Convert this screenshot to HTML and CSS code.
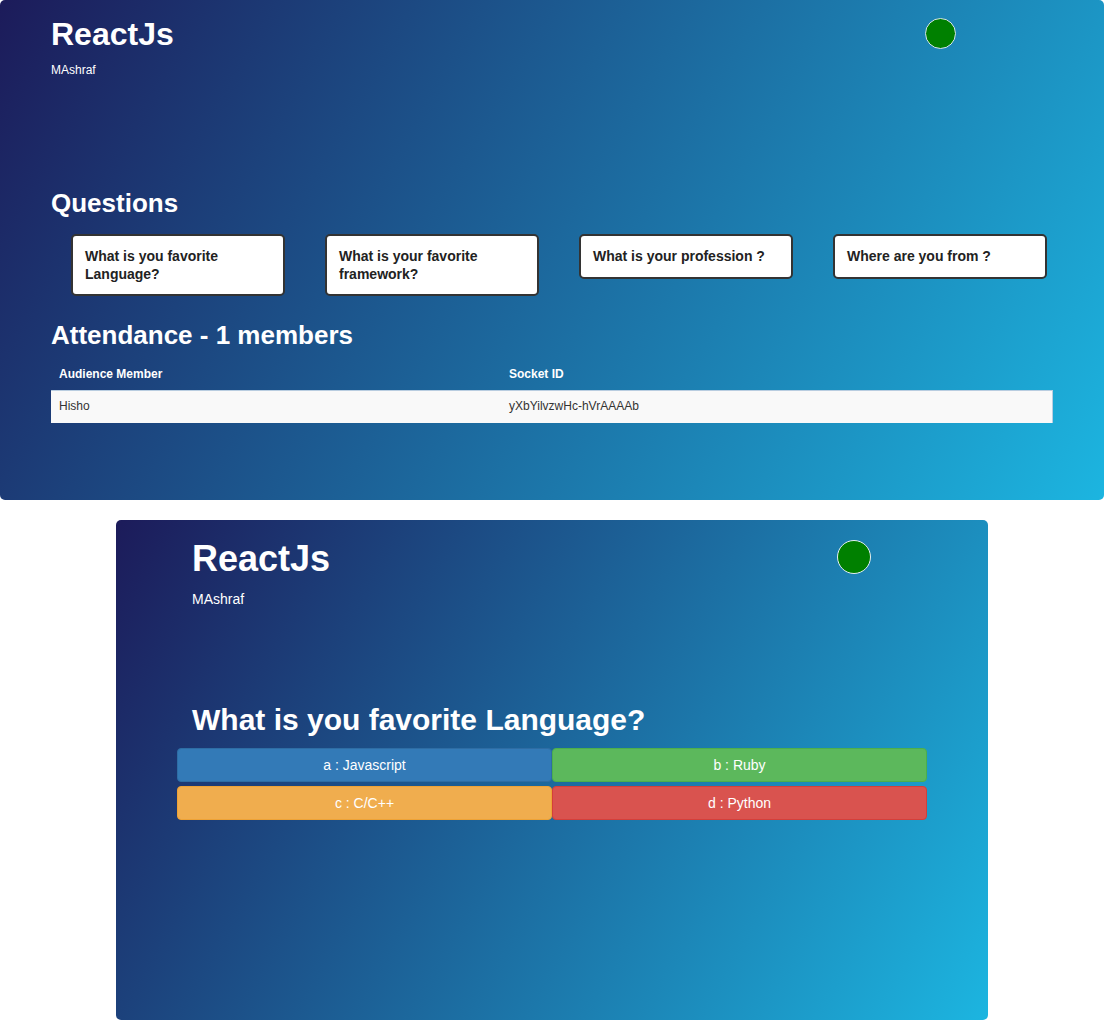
FILE: index.html
```html
<!DOCTYPE html>
<html lang="en">
<head>
<meta charset="utf-8">
<title>ReactJs Poll</title>
<link rel="stylesheet" href="styles.css">
</head>
<body>
  <section class="panel panel-speaker">
    <header class="head">
      <div class="brand">
        <h1 class="title">ReactJs</h1>
        <p class="speaker">MAshraf</p>
      </div>
      <span class="status" aria-label="connected"></span>
    </header>

    <h2 class="section-title questions-title">Questions</h2>
    <div class="questions">
      <div class="q-card">What is you favorite Language?</div>
      <div class="q-card">What is your favorite framework?</div>
      <div class="q-card">What is your profession ?</div>
      <div class="q-card">Where are you from ?</div>
    </div>

    <h2 class="section-title attendance-title">Attendance - 1 members</h2>
    <table class="members">
      <thead>
        <tr>
          <th class="col-name">Audience Member</th>
          <th>Socket ID</th>
        </tr>
      </thead>
      <tbody>
        <tr>
          <td>Hisho</td>
          <td>yXbYilvzwHc-hVrAAAAb</td>
        </tr>
      </tbody>
    </table>
  </section>

  <section class="panel panel-audience">
    <header class="head head-audience">
      <div class="brand">
        <h1 class="title title-lg">ReactJs</h1>
        <p class="speaker speaker-lg">MAshraf</p>
      </div>
      <span class="status status-lg" aria-label="connected"></span>
    </header>

    <h2 class="question">What is you favorite Language?</h2>
    <div class="answers">
      <button class="btn btn-a">a : Javascript</button>
      <button class="btn btn-b">b : Ruby</button>
      <button class="btn btn-c">c : C/C++</button>
      <button class="btn btn-d">d : Python</button>
    </div>
  </section>
</body>
</html>
```

FILE: styles.css
```css
html, body {
  margin: 0;
  padding: 0;
  background: #ffffff;
}

body {
  font-family: "Liberation Sans", Arial, sans-serif;
  color: #ffffff;
}

.panel {
  box-sizing: border-box;
  height: 500px;
  border-radius: 5px;
  background: linear-gradient(120deg, #1c1b5a 0%, #1cb5e0 100%);
  overflow: hidden;
}

/* ---------- speaker panel ---------- */
.panel-speaker {
  width: 1104px;
  padding: 16px 51px 0 51px;
}

.head {
  display: flex;
  justify-content: space-between;
  align-items: flex-start;
}

.title {
  margin: 0;
  font-size: 32px;
  line-height: 36px;
  font-weight: bold;
}

.speaker {
  margin: 10px 0 0 0;
  font-size: 12px;
  line-height: 16px;
}

.status {
  display: block;
  width: 29px;
  height: 29px;
  border: 1px solid #d8e4ee;
  border-radius: 50%;
  background: #008000;
  margin: 2px 97px 0 0;
}

.section-title {
  margin: 0;
  font-size: 26px;
  line-height: 30px;
  font-weight: bold;
}

.questions-title {
  margin-top: 110px;
}

.questions {
  display: grid;
  grid-template-columns: repeat(4, 214px);
  column-gap: 40px;
  align-items: start;
  margin: 16px 0 0 20px;
}

.q-card {
  box-sizing: border-box;
  background: #ffffff;
  border: 2px solid #333333;
  border-radius: 5px;
  padding: 12px 12px 11px 12px;
  font-size: 14px;
  line-height: 17.5px;
  font-weight: bold;
  color: #222222;
}

.attendance-title {
  margin-top: 24px;
}

.members {
  width: 1002px;
  margin-top: 7px;
  border-collapse: collapse;
  font-size: 12px;
  line-height: 17px;
}

.members th {
  text-align: left;
  font-weight: bold;
  color: #ffffff;
  padding: 9px 8px 7px 8px;
}

.members th.col-name {
  width: 434px;
}

.members td {
  padding: 7px 8px 8px 8px;
  background: #f9f9f9;
  color: #333333;
  border-top: 1px solid #b9cde0;
}

.members td:last-child {
  border-right: 1px solid #b9cde0;
}

/* ---------- audience panel ---------- */
.panel-audience {
  width: 872px;
  margin: 20px auto 0 auto;
  padding: 19px 76px 0 76px;
}

.title-lg {
  font-size: 36px;
  line-height: 40px;
}

.speaker-lg {
  font-size: 14px;
  line-height: 20px;
}

.status-lg {
  width: 32px;
  height: 32px;
  border-color: #e6eef4;
  margin: 1px 41px 0 0;
}

.question {
  margin: 94px 0 0 0;
  font-size: 30px;
  line-height: 33px;
  font-weight: bold;
}

.answers {
  display: grid;
  grid-template-columns: repeat(2, 375px);
  row-gap: 4px;
  margin: 12px 0 0 -15px;
}

.btn {
  box-sizing: border-box;
  height: 34px;
  padding: 6px 12px;
  font-family: "Liberation Sans", Arial, sans-serif;
  font-size: 14px;
  line-height: 20px;
  color: #ffffff;
  text-align: center;
  border: 1px solid transparent;
  border-radius: 4px;
  cursor: pointer;
}

.btn-a { background: #337ab7; border-color: #2e6da4; }
.btn-b { background: #5cb85c; border-color: #4cae4c; }
.btn-c { background: #f0ad4e; border-color: #eea236; }
.btn-d { background: #d9534f; border-color: #d43f3a; }
```
